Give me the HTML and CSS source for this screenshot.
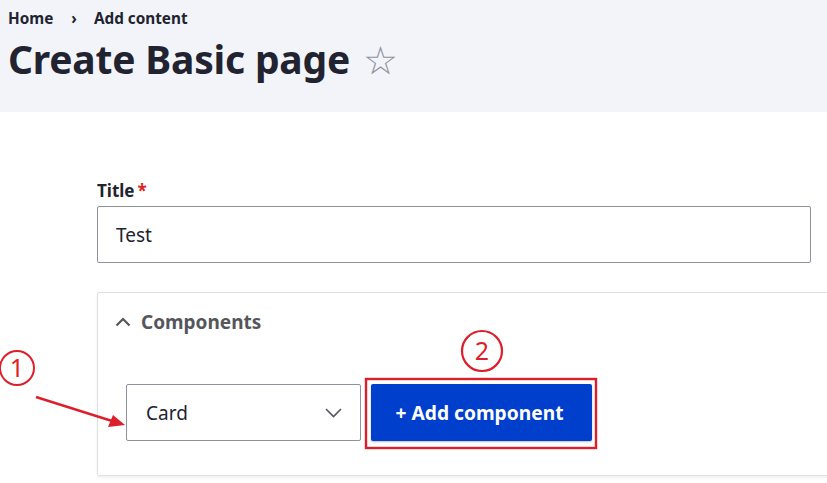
FILE: index.html
```html
<!DOCTYPE html>
<html lang="en">
<head>
<meta charset="utf-8">
<title>Create Basic page</title>
<link rel="stylesheet" href="styles.css">
</head>
<body>
<header class="page-header">
  <nav class="breadcrumb">
    <a class="crumb" href="#">Home</a>
    <span class="crumb-sep">›</span>
    <a class="crumb" href="#">Add content</a>
  </nav>
  <h1 class="page-title">Create Basic page <span class="star">☆</span></h1>
</header>
<main class="content">
  <div class="field">
    <label class="field-label">Title<span class="required">*</span></label>
    <div class="text-input">Test</div>
  </div>
  <section class="panel">
    <div class="panel-summary">
      <svg class="chev-up" width="16" height="10" viewBox="0 0 16 10"><path d="M1.5 8.5 L8 2 L14.5 8.5" fill="none" stroke="#55565b" stroke-width="2.2"/></svg>
      <span class="panel-title">Components</span>
    </div>
    <div class="panel-body">
      <div class="select">
        <span>Card</span>
        <svg class="chev-down" width="17" height="10" viewBox="0 0 17 10"><path d="M1 1 L8.5 8.5 L16 1" fill="none" stroke="#545560" stroke-width="1.6"/></svg>
      </div>
      <button class="btn-primary">+ Add component</button>
    </div>
  </section>
</main>
<svg class="annotations" width="827" height="483" viewBox="0 0 827 483">
  <circle cx="17" cy="368" r="17" fill="none" stroke="#dd1f2b" stroke-width="2"/>
  <text x="17" y="377" text-anchor="middle" class="anno-num">1</text>
  <circle cx="482" cy="351" r="20" fill="none" stroke="#dd1f2b" stroke-width="2.2"/>
  <text x="482" y="360" text-anchor="middle" class="anno-num">2</text>
  <line x1="36" y1="397" x2="112" y2="421" stroke="#dd1f2b" stroke-width="2.4"/>
  <polygon points="125,425 108,427 113,415" fill="#dd1f2b"/>
  <rect x="366" y="379" width="230" height="69" fill="none" stroke="#dd1f2b" stroke-width="2.4"/>
</svg>
</body>
</html>
```

FILE: styles.css
```css
html, body {
  margin: 0;
  padding: 0;
}
body {
  font-family: "Noto Sans", "Open Sans", sans-serif;
  color: #222330;
  background: #ffffff;
  width: 827px;
  height: 483px;
  overflow: hidden;
  position: relative;
}
.page-header {
  background: #f3f4f9;
  height: 112px;
  padding: 7px 0 0 8px;
  box-sizing: border-box;
}
.breadcrumb {
  display: flex;
  align-items: center;
  font-size: 15.3px;
  font-weight: 700;
  line-height: 22px;
}
.crumb {
  color: #222330;
  text-decoration: none;
}
.crumb-sep {
  margin: 0 17px 0 18px;
}
.page-title {
  margin: 4px 0 0 0;
  font-size: 39px;
  line-height: 52px;
  font-weight: 700;
  letter-spacing: -0.2px;
}
.star {
  font-weight: 400;
  color: #8e929c;
  font-size: 39px;
  font-family: "DejaVu Sans", sans-serif;
  margin-left: 3px;
}
.content {
  padding: 68px 0 0 97px;
}
.field {
  width: 714px;
}
.field-label {
  display: block;
  font-size: 17px;
  font-weight: 700;
  line-height: 22px;
  margin-bottom: 4px;
}
.required {
  color: #dc2323;
  margin-left: 3px;
}
.text-input {
  box-sizing: border-box;
  height: 57px;
  border: 1px solid #8e929c;
  border-radius: 2px;
  padding: 0 18px;
  display: flex;
  align-items: center;
  font-size: 19px;
}
.panel {
  margin-top: 29px;
  width: 760px;
  box-sizing: border-box;
  height: 184px;
  border: 1px solid #dedfe4;
  border-radius: 2px;
  box-shadow: 0 2px 3px rgba(0,0,0,0.06);
}
.panel-summary {
  display: flex;
  align-items: center;
  padding: 18px 0 0 17px;
  height: 22px;
}
.chev-up {
  margin-right: 10px;
}
.panel-title {
  font-size: 19px;
  font-weight: 700;
  color: #55565b;
  line-height: 22px;
}
.panel-body {
  display: flex;
  align-items: center;
  padding: 51px 0 0 28px;
  gap: 10px;
}
.select {
  box-sizing: border-box;
  width: 235px;
  height: 57px;
  border: 1px solid #8e929c;
  border-radius: 2px;
  display: flex;
  align-items: center;
  justify-content: space-between;
  padding: 0 18px 0 19px;
  font-size: 19px;
}
.btn-primary {
  box-sizing: border-box;
  width: 221px;
  height: 57px;
  padding: 0 4px 0 0;
  background: #003ecc;
  border: none;
  border-radius: 2px;
  color: #ffffff;
  font-family: "Noto Sans", "Open Sans", sans-serif;
  font-size: 19.2px;
  font-weight: 700;
  box-shadow: 0 1px 2px rgba(0,0,0,0.25);
}
.annotations {
  position: absolute;
  left: 0;
  top: 0;
  pointer-events: none;
}
.anno-num {
  font-family: "Noto Sans", sans-serif;
  font-size: 25px;
  fill: #dd1f2b;
}
```
